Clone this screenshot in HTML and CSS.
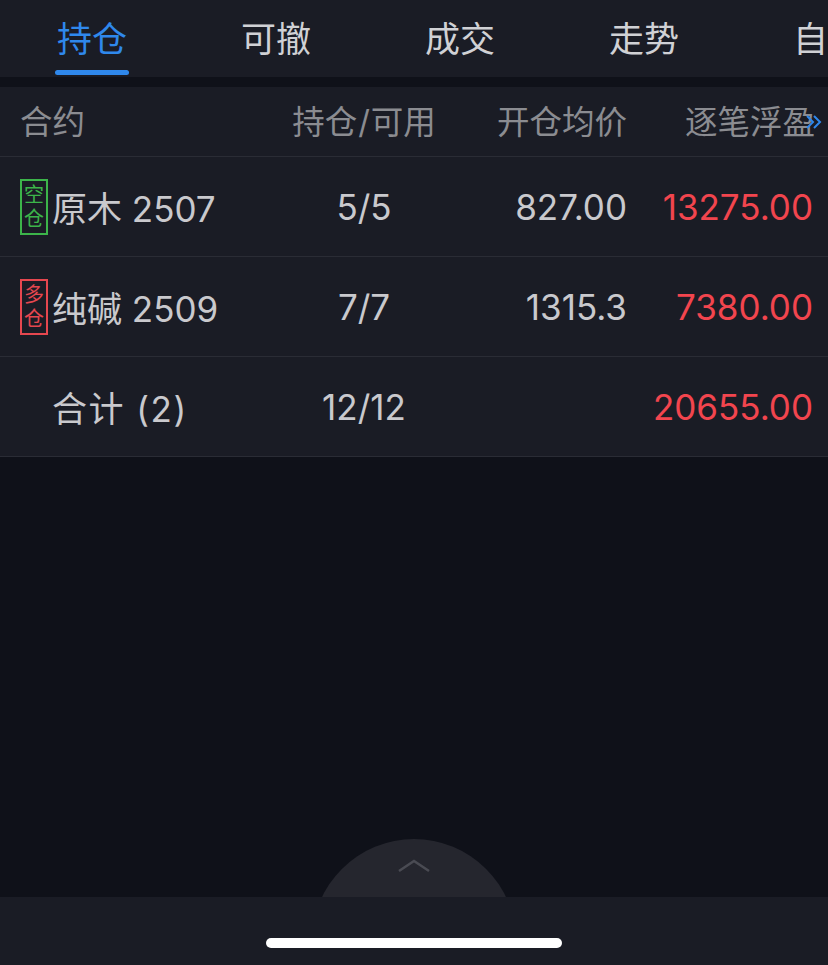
FILE: index.html
```html
<!DOCTYPE html>
<html lang="zh-CN">
<head>
  <meta charset="UTF-8">
  <title>持仓</title>
  <link rel="stylesheet" href="styles.css">
</head>
<body>
  <div class="page">
    <div class="tabs">
      <div class="tab active">持仓</div>
      <div class="tab">可撤</div>
      <div class="tab">成交</div>
      <div class="tab">走势</div>
      <div class="tab">自选</div>
    </div>

    <div class="table">
      <div class="row head">
        <div class="c1">合约</div>
        <div class="c2">持仓<span class="slash">/</span>可用</div>
        <div class="c3">开仓均价</div>
        <div class="c4"><span class="h4">逐笔浮盈</span>
          <svg class="more" width="18" height="16" viewBox="0 0 18 16"><path d="M2 2 L8 8 L2 14 M9 2 L15 8 L9 14" fill="none" stroke="#2f88ec" stroke-width="2"/></svg>
        </div>
      </div>
      <div class="row">
        <div class="c1"><span class="tag short">空<br>仓</span>原木 2507</div>
        <div class="c2">5/5</div>
        <div class="c3">827.00</div>
        <div class="c4 up">13275.00</div>
      </div>
      <div class="row">
        <div class="c1"><span class="tag long">多<br>仓</span>纯碱 2509</div>
        <div class="c2">7/7</div>
        <div class="c3">1315.3</div>
        <div class="c4 up">7380.00</div>
      </div>
      <div class="row total">
        <div class="c1"><span class="name">合计 (2)</span></div>
        <div class="c2">12/12</div>
        <div class="c3"></div>
        <div class="c4 up">20655.00</div>
      </div>
    </div>

    <div class="empty">
      <div class="pull">
        <svg width="34" height="14" viewBox="0 0 34 14"><path d="M2 12 L17 2 L32 12" fill="none" stroke="#4a4b53" stroke-width="2.5"/></svg>
      </div>
    </div>

    <div class="bottom">
      <div class="home"></div>
    </div>
  </div>
</body>
</html>
```

FILE: styles.css
```css
* { box-sizing: border-box; }
html, body { margin: 0; padding: 0; }
body {
  background: #0f1119;
  font-family: Inter, "Noto Sans CJK SC", sans-serif;
  color: #c9c9cd;
}
.page { width: 828px; height: 965px; display: flex; flex-direction: column; overflow: hidden; }

.tabs {
  height: 77px; display: flex; background: #1a1c25; overflow: hidden;
  margin-bottom: 10px;
}
.tab {
  flex: 0 0 184px; position: relative; text-align: center;
  font-size: 35px; color: #d0d1d5; line-height: 78px;
}
.tab.active { color: #2f88ec; }
.tab.active::after {
  content: ""; position: absolute; left: 55px; width: 74px; top: 70px; height: 5px;
  background: #2f88ec; border-radius: 3px;
}

.table { background: #1a1c25; }
.row {
  display: grid; grid-template-columns: 250px 188px 169px 186px;
  padding: 0 15px 0 20px; height: 100px; align-items: center;
  border-bottom: 1px solid #2a2c35;
  font-size: 35px;
}
.row.head { height: 70px; font-size: 32.5px; color: #8b8c91; padding-bottom: 4px; }
.c1 { display: flex; align-items: center; }
.c2 { text-align: center; }
.c3, .c4 { text-align: right; }
.c4 { position: relative; }
.h4 { margin-right: -2px; }
.up { color: #f2454e; }
.slash { margin: 0 1px; }
.more { position: absolute; right: -10px; top: 50%; margin-top: -6px; }

.tag {
  display: inline-block; width: 28px; height: 56px; margin-right: 4px;
  border: 2px solid; font-size: 20px; line-height: 24px; text-align: center;
  padding-top: 2px;
}
.tag.short { color: #3cb44a; border-color: #3cb44a; }
.tag.long { color: #e5474f; border-color: #e5474f; }
.row.total .name { margin-left: 32px; letter-spacing: 1.5px; }

.empty { flex: 1; position: relative; }
.pull {
  position: absolute; left: 312px; top: 382px; width: 204px; height: 204px;
  border-radius: 50%; background: #25262e; display: flex; justify-content: center;
  padding-top: 20px;
}
.pull svg { display: block; }

.bottom {
  height: 68px; background: #1a1c25; position: relative; z-index: 1;
  display: flex; justify-content: center; padding-top: 41px;
}
.home { width: 296px; height: 10px; border-radius: 5px; background: #ffffff; }
```
